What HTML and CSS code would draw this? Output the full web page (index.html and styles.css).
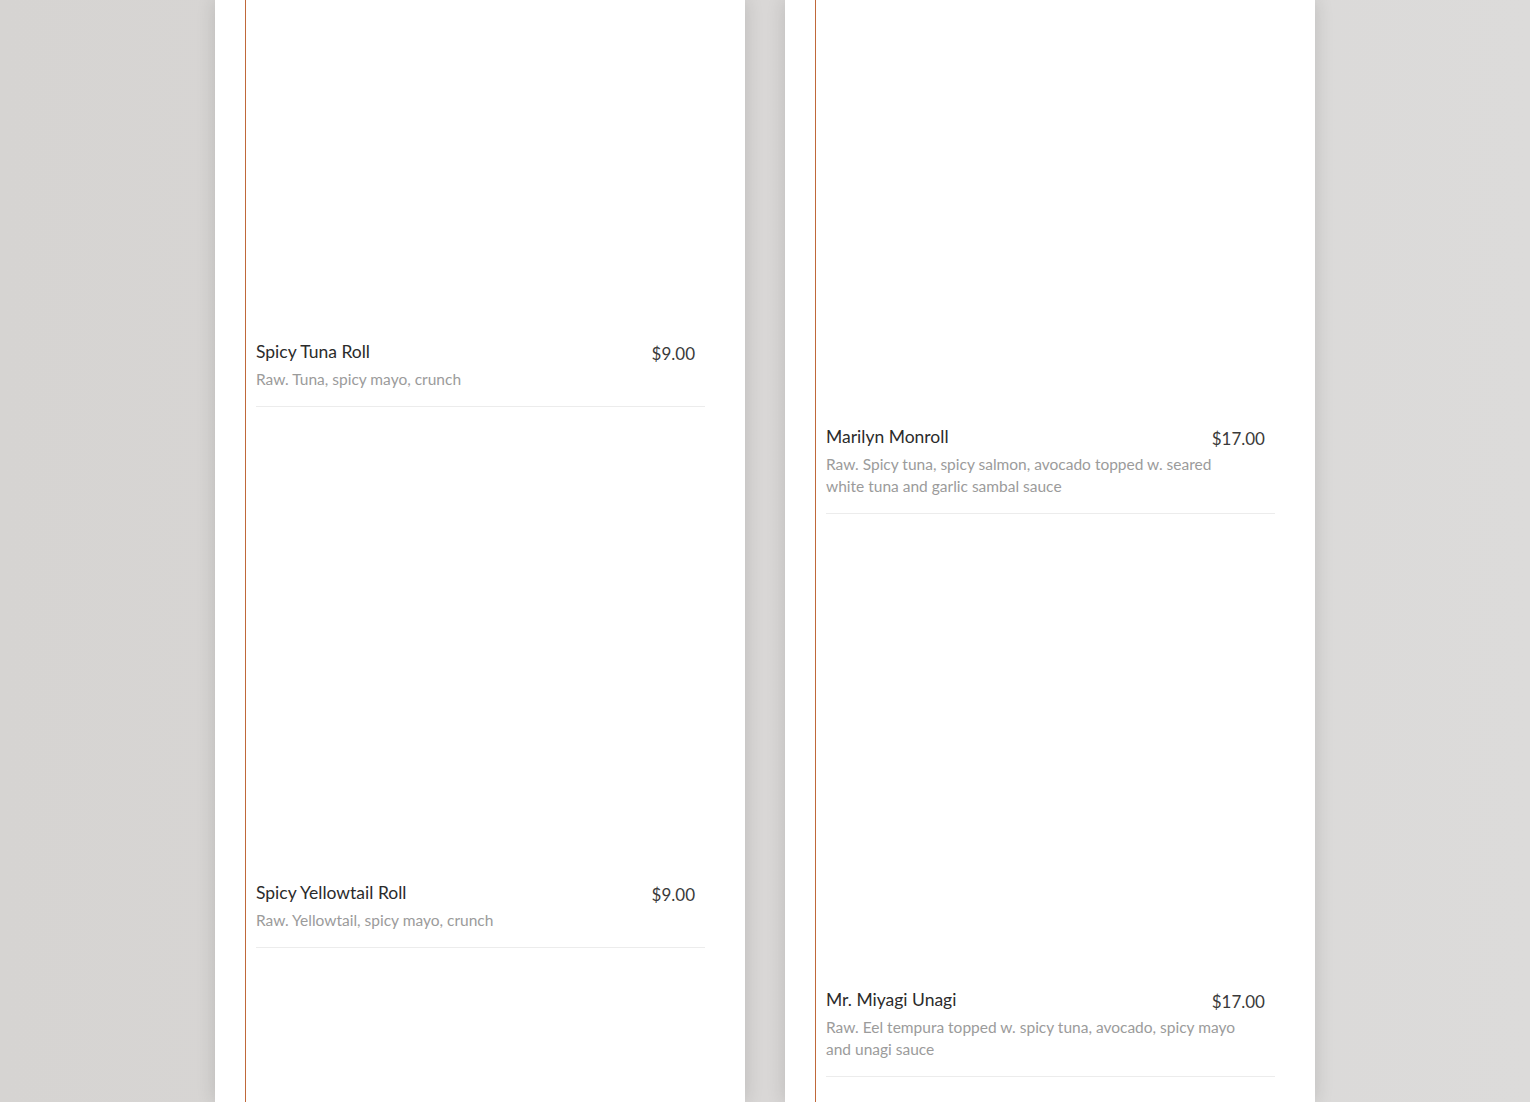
FILE: index.html
```html
<!DOCTYPE html>
<html lang="en">
<head>
<meta charset="utf-8">
<title>Menu</title>
<link rel="stylesheet" href="styles.css">
</head>
<body>
<main class="page">
  <section class="card">
    <div class="menu">
      <div class="photo photo-first-a"></div>
      <div class="item">
        <div class="head">
          <div class="name">Spicy Tuna Roll</div>
          <div class="price">$9.00</div>
        </div>
        <div class="desc">Raw. Tuna, spicy mayo, crunch</div>
      </div>
      <div class="photo"></div>
      <div class="item">
        <div class="head">
          <div class="name">Spicy Yellowtail Roll</div>
          <div class="price">$9.00</div>
        </div>
        <div class="desc">Raw. Yellowtail, spicy mayo, crunch</div>
      </div>
      <div class="photo"></div>
    </div>
  </section>
  <section class="card">
    <div class="menu">
      <div class="photo photo-first-b"></div>
      <div class="item">
        <div class="head">
          <div class="name">Marilyn Monroll</div>
          <div class="price">$17.00</div>
        </div>
        <div class="desc">Raw. Spicy tuna, spicy salmon, avocado topped w. seared white tuna and garlic sambal sauce</div>
      </div>
      <div class="photo"></div>
      <div class="item">
        <div class="head">
          <div class="name">Mr. Miyagi Unagi</div>
          <div class="price">$17.00</div>
        </div>
        <div class="desc">Raw. Eel tempura topped w. spicy tuna, avocado, spicy mayo and unagi sauce</div>
      </div>
      <div class="photo"></div>
    </div>
  </section>
</main>
</body>
</html>
```

FILE: styles.css
```css
html, body {
  margin: 0;
  height: 100%;
  overflow: hidden;
}

body {
  background: linear-gradient(90deg, #d6d4d2 0%, #d9d7d6 50%, #dcdbda 100%);
  font-family: "Lato", "Noto Sans", sans-serif;
}

.page {
  display: flex;
  justify-content: center;
  gap: 40px;
  height: 100%;
}

.card {
  width: 530px;
  background: #fff;
  box-shadow: 0 0 18px rgba(0, 0, 0, 0.14);
  overflow: hidden;
}

.menu {
  margin: 0 40px 0 30px;
  border-left: 1px solid #c0683a;
  padding-left: 10px;
  min-height: 100%;
}

.photo {
  height: 468px;
}

.photo-first-a {
  height: 334px;
}

.photo-first-b {
  height: 419px;
}

.item {
  padding: 6px 10px 16px 0;
  border-bottom: 1px solid #ececec;
}

.head {
  display: flex;
  justify-content: space-between;
  align-items: flex-start;
  height: 24px;
}

.name {
  font-size: 17.5px;
  line-height: 24px;
  color: #2b2b2b;
}

.desc {
  max-width: 420px;
  margin-top: 4px;
  font-size: 15.5px;
  line-height: 22px;
  color: #9b9b9b;
}

.price {
  margin-top: 4px;
  font-size: 17px;
  line-height: 20px;
  color: #3a3a3a;
  white-space: nowrap;
}
```
